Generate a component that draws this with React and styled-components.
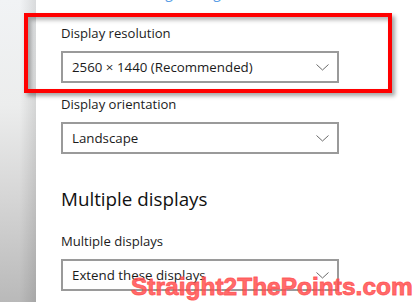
import React from "react";
import styled, { createGlobalStyle } from "styled-components";

const GlobalStyle = createGlobalStyle`
  html, body {
    margin: 0;
    padding: 0;
    background: #ffffff;
  }
  body {
    font-family: "Open Sans", "Noto Sans", sans-serif;
    color: #1a1a1a;
  }
`;

const Page = styled.div`
  position: relative;
  display: flex;
  width: 413px;
  height: 302px;
  overflow: hidden;
  background: #ffffff;
`;

const SideStrip = styled.div`
  flex: 0 0 36px;
  background:
    linear-gradient(to right, rgba(0, 0, 0, 0) 55%, rgba(0, 0, 0, 0.1) 100%),
    linear-gradient(to bottom, #f1f3f5 0%, #eceded 35%, #d6d6d6 65%, #b9b9b9 100%);
`;

const Content = styled.div`
  flex: 1;
  display: flex;
  flex-direction: column;
  padding-left: 25px;
`;

const LinkRow = styled.div`
  margin-top: -17px;
  height: 19px;
  font-size: 14px;
  line-height: 19px;
  color: #5a9fe6;
  white-space: nowrap;
`;

const Label = styled.div`
  font-size: 13.1px;
  line-height: 20px;
  color: #1b1b1b;
  margin-top: ${(p) => p.$top}px;
  margin-bottom: 8px;
`;

const Heading = styled.div`
  font-size: 18.8px;
  line-height: 26px;
  color: #111;
  margin-top: 32px;
`;

const Select = styled.div`
  box-sizing: border-box;
  width: 278px;
  height: 32px;
  border: 2px solid #9a9a9a;
  display: flex;
  align-items: center;
  justify-content: space-between;
  padding: 0 8px 0 9px;
  font-size: 13.3px;
  color: #1b1b1b;
  background: #fff;
`;

const Chevron = () => (
  <svg width="13" height="7" viewBox="0 0 13 7">
    <path d="M0.5 0.5 L6.5 6 L12.5 0.5" fill="none" stroke="#6a6a6a" strokeWidth="1" />
  </svg>
);

const Highlight = styled.div`
  position: absolute;
  left: 24px;
  top: 13px;
  width: 368px;
  height: 80px;
  box-sizing: border-box;
  border: 4px solid #ff0000;
  box-shadow: 3px 3px 4px rgba(0, 0, 0, 0.35), inset 3px 3px 4px rgba(0, 0, 0, 0.3);
  pointer-events: none;
`;

const Watermark = styled.div`
  position: absolute;
  left: 131px;
  top: 272px;
  font-family: "Liberation Sans", Arial, sans-serif;
  font-weight: 700;
  font-size: 24.5px;
  line-height: 30px;
  color: rgba(255, 80, 80, 0.85);
  -webkit-text-stroke: 0.9px rgba(255, 80, 80, 0.85);
  white-space: nowrap;
`;

const Dropdown = ({ value }) => (
  <Select>
    <span>{value}</span>
    <Chevron />
  </Select>
);

export default function App() {
  return (
    <>
      <GlobalStyle />
      <Page>
        <SideStrip />
        <Content>
          <LinkRow>Advanced scaling settings</LinkRow>
          <Label $top={21}>Display resolution</Label>
          <Dropdown value="2560 × 1440 (Recommended)" />
          <Label $top={11}>Display orientation</Label>
          <Dropdown value="Landscape" />
          <Heading>Multiple displays</Heading>
          <Label $top={19}>Multiple displays</Label>
          <Dropdown value="Extend these displays" />
        </Content>
        <Highlight />
        <Watermark>Straight2ThePoints.com</Watermark>
      </Page>
    </>
  );
}
